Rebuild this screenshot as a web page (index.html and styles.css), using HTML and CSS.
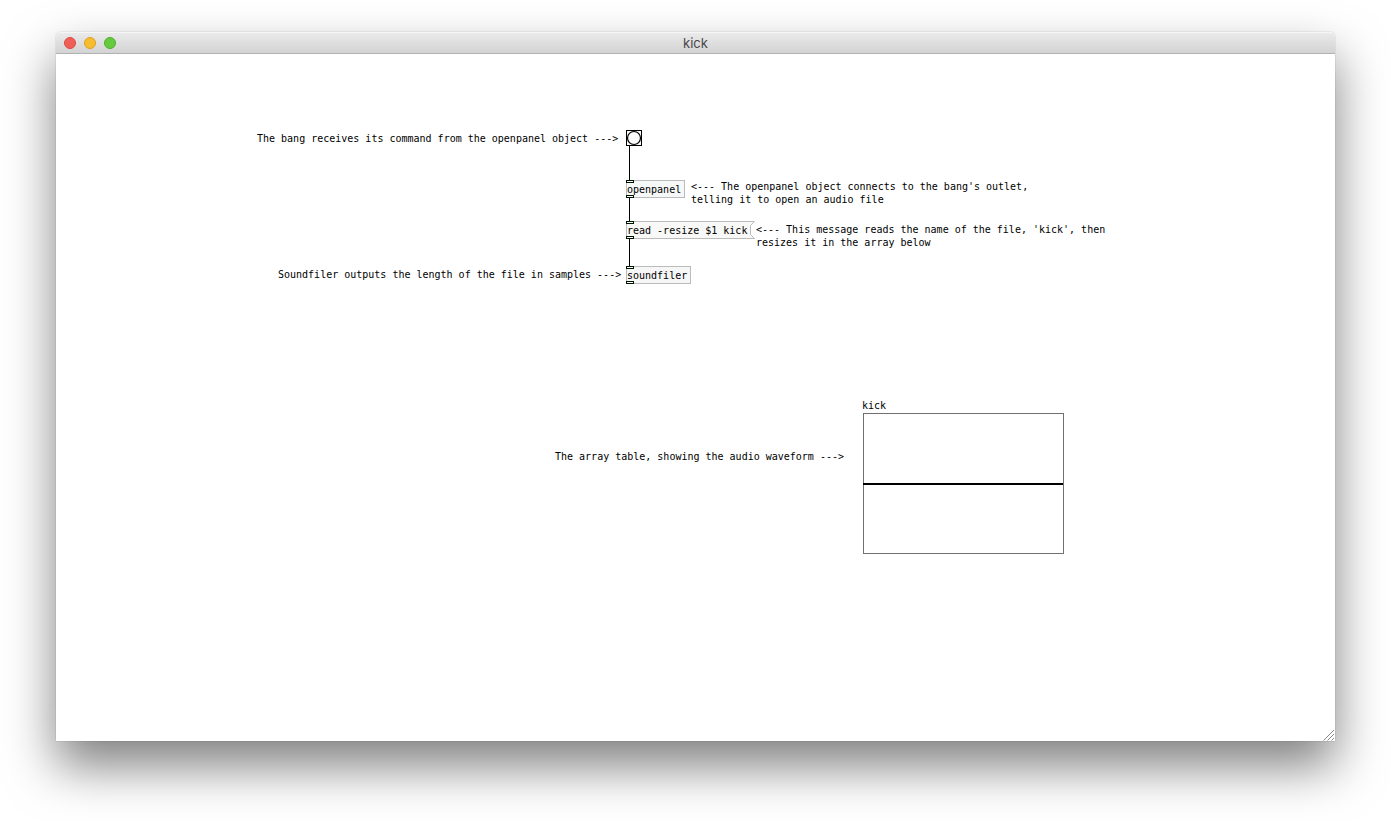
FILE: index.html
```
<!DOCTYPE html>
<html lang="en">
<head>
    <meta charset="utf-8">
    <title>kick</title>
    <link rel="stylesheet" href="styles.css">
</head>
<body>

    <div class="window">
        <header class="titlebar">
            <div class="controls">
                <button class="control close" aria-label="Close"></button>
                <button class="control minimize" aria-label="Minimize"></button>
                <button class="control maximize" aria-label="Zoom"></button>
            </div>
            <h1 class="title">kick</h1>
        </header>

        <main class="canvas">
            <!-- patch cords -->
            <div class="cord cord-bang"></div>
            <div class="cord cord-openpanel"></div>
            <div class="cord cord-message"></div>

            <!-- objects -->
            <button class="bang" aria-label="Bang">
                <svg width="16" height="16" viewBox="0 0 16 16">
                    <rect x="0.5" y="0.5" width="15" height="15" fill="#fcfcfc" stroke="#000"/>
                    <circle cx="8" cy="8" r="6.5" fill="#fcfcfc" stroke="#000" stroke-width="1.2"/>
                </svg>
            </button>
            <div class="object openpanel">openpanel</div>
            <button class="object message">read -resize $1 kick
                <svg class="flag" width="5" height="18" viewBox="0 0 5 18">
                    <path d="M5 0H4.5L0.5 4.5V13.5L4.5 17.5H5Z" fill="#fff"/>
                    <path d="M4.5 0.5L0.5 4.5V13.5L4.5 17.5" fill="none" stroke="#bbb"/>
                </svg>
            </button>
            <div class="object soundfiler">soundfiler</div>

            <!-- comments -->
            <p class="comment about-bang">The bang receives its command from the openpanel object ---&gt;</p>
            <p class="comment about-openpanel">&lt;--- The openpanel object connects to the bang's outlet,<br>telling it to open an audio file</p>
            <p class="comment about-message">&lt;--- This message reads the name of the file, 'kick', then<br>resizes it in the array below</p>
            <p class="comment about-soundfiler">Soundfiler outputs the length of the file in samples ---&gt;</p>
            <p class="comment about-array">The array table, showing the audio waveform ---&gt;</p>

            <!-- array -->
            <p class="comment array-name">kick</p>
            <div class="array"><div class="waveform"></div></div>

            <svg class="grip" width="12" height="12" viewBox="0 0 12 12">
                <path d="M0.5 11.5L11 1M4.5 11.5L11 5M8.5 11.5L11 9" fill="none" stroke="#888"/>
            </svg>
        </main>
    </div>

</body>
</html>
```
FILE: styles.css
```
*,
*::before,
*::after {
    box-sizing: border-box;
}
body {
    margin: 0;
    height: 100vh;
    padding: 32px 56px 80px;
    background: #fff;
    overflow: hidden;
}
button {
    padding: 0;
    border: none;
    background: none;
}
.window {
    display: flex;
    flex-direction: column;
    height: 100%;
    border-radius: 5px 5px 0 0;
    background: #fff;
    box-shadow: 0 0 1px rgba(0, 0, 0, 0.5), 0 25px 50px rgba(0, 0, 0, 0.5);
}
.titlebar {
    display: grid;
    grid-template-columns: 1fr auto 1fr;
    align-items: center;
    height: 22px;
    padding: 0 8px;
    border-bottom: 1px solid #b1b1b1;
    border-radius: 5px 5px 0 0;
    background: linear-gradient(#ebebeb, #d3d3d3);
    box-shadow: inset 0 1px #f6f6f6;
}
.controls {
    display: flex;
    gap: 8px;
}
.control {
    width: 12px;
    height: 12px;
    border: 1px solid;
    border-radius: 50%;
}
.close {
    background: #ed5f57;
    border-color: #dc4a43;
}
.minimize {
    background: #f7bd2e;
    border-color: #dfa023;
}
.maximize {
    background: #65ca3e;
    border-color: #4fae2b;
}
.title {
    margin: 0;
    color: #474747;
    font: 13px/20px Inter, "Liberation Sans", sans-serif;
}
.canvas {
    position: relative;
    flex: 1;
    font: 10px/13px "DejaVu Sans Mono", "Liberation Mono", monospace;
    color: #000;
}

/* patch cords */
.cord {
    position: absolute;
    left: 573px;
    width: 1px;
    background: #000;
}
.cord-bang {
    top: 92px;
    height: 34px;
}
.cord-openpanel {
    top: 144px;
    height: 23px;
}
.cord-message {
    top: 185px;
    height: 27px;
}

/* objects */
.bang {
    position: absolute;
    left: 570px;
    top: 76px;
    width: 16px;
    height: 16px;
}
.bang svg {
    display: block;
}
.object {
    position: absolute;
    left: 570px;
    height: 18px;
    padding: 2px 3px 0 0;
    border: 1px solid #bbb;
    background: #f6f8f8;
    color: #000;
    font: inherit;
    line-height: 14px;
    text-align: left;
    white-space: nowrap;
}
/* inlet and outlet */
.object::before,
.object::after {
    content: "";
    position: absolute;
    left: -1px;
    width: 8px;
    height: 3px;
    border: 1px solid #001400;
    background: #fcfcfc;
}
.object::before {
    top: -1px;
}
.object::after {
    bottom: -1px;
}
.openpanel {
    top: 126px;
}
.message {
    top: 167px;
    padding-right: 8px;
    border-right: none;
    background: #f8f8f6;
}
.soundfiler {
    top: 212px;
    background: #f6f6f6;
}
.flag {
    position: absolute;
    top: -1px;
    right: 0;
}

/* comments */
.comment {
    position: absolute;
    margin: 0;
    white-space: nowrap;
}
.about-bang {
    left: 201px;
    top: 78px;
}
.about-openpanel {
    left: 635px;
    top: 126px;
}
.about-message {
    left: 700px;
    top: 169px;
}
.about-soundfiler {
    left: 222px;
    top: 214px;
}
.about-array {
    left: 499px;
    top: 396px;
}
.array-name {
    left: 806px;
    top: 345px;
}

/* array */
.array {
    position: absolute;
    left: 807px;
    top: 359px;
    display: flex;
    align-items: center;
    width: 201px;
    height: 141px;
    border: 1px solid #707070;
}
.waveform {
    flex: 1;
    height: 2px;
    margin-left: -1px;
    background: #000;
}
.grip {
    position: absolute;
    right: 0;
    bottom: 0;
}
```
